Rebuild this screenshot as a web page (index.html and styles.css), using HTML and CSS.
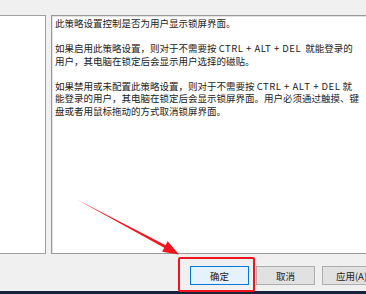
FILE: index.html
```html
<!DOCTYPE html>
<html lang="en">
<head>
<meta charset="UTF-8">
<title>显示锁屏界面</title>
<link rel="stylesheet" href="styles.css">
</head>
<body>
<div class="dialog">
    <div class="top-strip"></div>
    <!-- 选项 / 帮助 两栏 -->
    <div class="panes">
        <div class="pane-left"></div>
        <div class="pane-help">
            <p>此策略设置控制是否为用户显示锁屏界面。</p>
            <p>如果启用此策略设置，则对于不需要按 <span class="keys">CTRL + ALT + DEL</span>&nbsp; 就能登录的<br>用户，其电脑在锁定后会显示用户选择的磁贴。</p>
            <p>如果禁用或未配置此策略设置，则对于不需要按 <span class="keys">CTRL + ALT + DEL</span> 就<br>能登录的用户，其电脑在锁定后会显示锁屏界面。用户必须通过触摸、键<br>盘或者用鼠标拖动的方式取消锁屏界面。</p>
        </div>
    </div>
    <!-- 底部按钮 -->
    <div class="footer">
        <button class="btn btn-default">确定</button>
        <button class="btn">取消</button>
        <button class="btn">应用(A)</button>
        <div class="mark"></div>
    </div>
    <div class="taskbar"></div>
</div>
<svg class="arrow" width="366" height="294" viewBox="0 0 366 294">
    <polygon points="76,199 165.6,245.2 167.7,241.2 179,254.5 162.1,251.8 164.2,247.8" fill="#f0141e"/>
</svg>
</body>
</html>
```
FILE: styles.css
```css
/* 页面整体 */
body {
    margin: 0;
    width: 366px;
    height: 294px;
    overflow: hidden;
    background: #f0f0f0;
    font-family: "Noto Sans CJK SC", "Liberation Sans", sans-serif;
    position: relative;
}

.dialog {
    display: flex;
    flex-direction: column;
    height: 294px;
}

.top-strip {
    height: 15px;
}

/* 两栏 */
.panes {
    display: flex;
    height: 239px;
    gap: 5px;
}

.pane-left {
    width: 48px;
    margin-left: -2px;
    background: #fff;
    border: 1px solid #a0a0a0;
    box-sizing: border-box;
}

.pane-help {
    flex: 1;
    margin-right: -20px;
    background: #fff;
    border: 1px solid #9a9a9a;
    box-shadow: inset 1px 1px 0 #e2e2e2;
    box-sizing: border-box;
    padding: 1px 3px;
    font-size: 9.5px;
    line-height: 12.5px;
    color: #222;
    white-space: nowrap;
}

.pane-help p {
    margin: 0 0 12.5px 0;
}

.keys {
    letter-spacing: 0.5px;
}

/* 底部按钮 */
.footer {
    height: 37px;
    display: flex;
    align-items: flex-start;
    gap: 7px;
    padding: 12px 0 0 190px;
    box-sizing: border-box;
    position: relative;
}

.btn {
    width: 59px;
    height: 19px;
    flex-shrink: 0;
    padding: 0;
    background: #e1e1e1;
    border: 1px solid #adadad;
    font-family: "Noto Sans CJK SC", "Liberation Sans", sans-serif;
    font-size: 9.5px;
    color: #222;
}

.btn-default {
    background: #e5f1fb;
    border-color: #0078d7;
}

/* 红框标注 */
.mark {
    position: absolute;
    left: 178px;
    top: 3px;
    width: 77px;
    height: 35px;
    border: 2px solid #f0141e;
    border-radius: 2px;
    box-sizing: border-box;
}

.taskbar {
    flex: 1;
    background: #16233b;
}

.arrow {
    position: absolute;
    left: 0;
    top: 0;
    pointer-events: none;
}
```
